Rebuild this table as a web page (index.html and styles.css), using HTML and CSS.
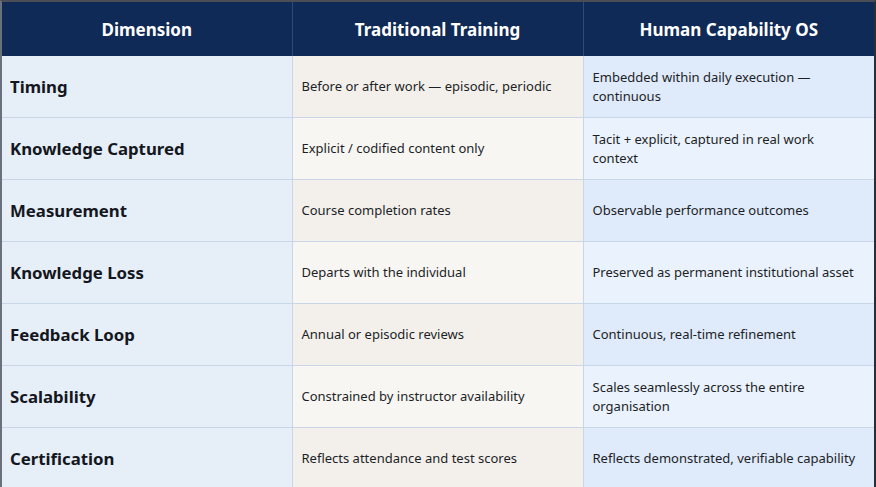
FILE: index.html
```html
<!DOCTYPE html>
<html>
<head>
<meta charset="utf-8">
<link rel="stylesheet" href="styles.css">
</head>
<body>
<div class="frame">
<table class="cmp">
  <colgroup><col class="c1"><col class="c2"><col class="c3"></colgroup>
  <thead>
    <tr><th>Dimension</th><th>Traditional Training</th><th>Human Capability OS</th></tr>
  </thead>
  <tbody>
    <tr class="odd"><td class="dim">Timing</td><td class="trad">Before or after work — episodic, periodic</td><td class="hc">Embedded within daily execution — continuous</td></tr>
    <tr class="even"><td class="dim">Knowledge Captured</td><td class="trad">Explicit / codified content only</td><td class="hc">Tacit + explicit, captured in real work context</td></tr>
    <tr class="odd"><td class="dim">Measurement</td><td class="trad">Course completion rates</td><td class="hc">Observable performance outcomes</td></tr>
    <tr class="even"><td class="dim">Knowledge Loss</td><td class="trad">Departs with the individual</td><td class="hc">Preserved as permanent institutional asset</td></tr>
    <tr class="odd"><td class="dim">Feedback Loop</td><td class="trad">Annual or episodic reviews</td><td class="hc">Continuous, real-time refinement</td></tr>
    <tr class="even"><td class="dim">Scalability</td><td class="trad">Constrained by instructor availability</td><td class="hc">Scales seamlessly across the entire organisation</td></tr>
    <tr class="odd"><td class="dim">Certification</td><td class="trad">Reflects attendance and test scores</td><td class="hc">Reflects demonstrated, verifiable capability</td></tr>
  </tbody>
</table>
</div>
</body>
</html>
```

FILE: styles.css
```css
html, body {
  margin: 0;
  padding: 0;
  background: #e6eef8;
}
body {
  width: 876px;
  height: 487px;
  overflow: hidden;
  font-family: "Noto Sans", "Open Sans", sans-serif;
}
.frame {
  border-top: 2px solid #4b4e55;
  border-left: 2px solid #6b717c;
  border-right: 2px solid #2b2d31;
  width: 872px;
}
.cmp {
  width: 872px;
  border-collapse: collapse;
  table-layout: fixed;
}
.c1 { width: 290px; }
.c2 { width: 291px; }
.c3 { width: 291px; }
.cmp th {
  height: 54px;
  padding: 0;
  background: #0f2a56;
  color: #ffffff;
  font-size: 17px;
  font-weight: 700;
  text-align: center;
  border-left: 1px solid #2c4a7a;
}
.cmp th:first-child { border-left: none; }
.cmp td {
  height: 61px;
  padding: 0 9px;
  border-top: 1px solid #c9d6e8;
  border-left: 1px solid #c9d6e8;
  vertical-align: middle;
  color: #1c1f26;
  font-size: 13px;
  line-height: 19px;
}
.cmp td:first-child { border-left: none; }
.cmp tbody tr:first-child td { border-top: none; }
.cmp td.dim {
  background: #e6eef8;
  padding-left: 8px;
  font-size: 16.8px;
  font-weight: 700;
  color: #14171d;
}
.cmp td.hc { padding-right: 12px; }
.odd .trad { background: #f3f0ec; }
.even .trad { background: #f8f6f3; }
.odd .hc { background: #dfeafb; }
.even .hc { background: #eaf2fd; }
```
